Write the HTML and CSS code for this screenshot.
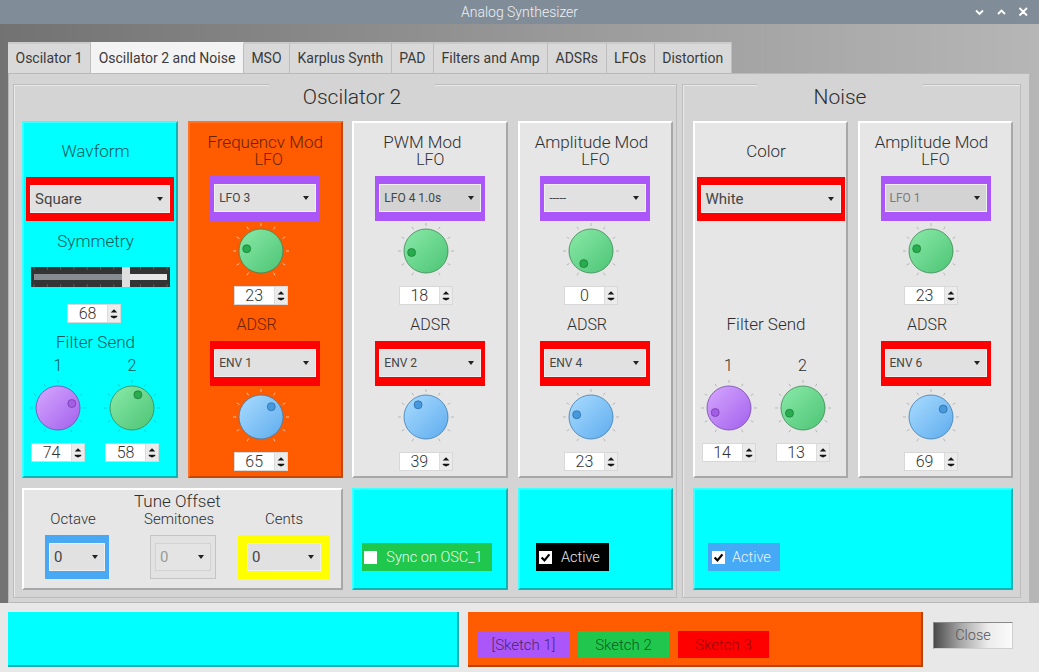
FILE: index.html
```html
<!DOCTYPE html>
<html>
<head>
<meta charset="utf-8">
<title>Analog Synthesizer</title>
<link rel="stylesheet" href="styles.css">
</head>
<body>
<svg class="defs" width="0" height="0" aria-hidden="true">
  <defs>
    <linearGradient id="gg" x1="0" y1="0" x2="1" y2="1"><stop offset="0" stop-color="#8aeaa8"/><stop offset="1" stop-color="#4cc475"/></linearGradient>
    <linearGradient id="gb" x1="0" y1="0" x2="1" y2="1"><stop offset="0" stop-color="#aadcff"/><stop offset="1" stop-color="#5eacee"/></linearGradient>
    <linearGradient id="gp" x1="0" y1="0" x2="1" y2="1"><stop offset="0" stop-color="#d6a8ff"/><stop offset="1" stop-color="#a260ec"/></linearGradient>
    <g id="ticks">
      <line x1="-12.5" y1="21.65" x2="-14" y2="24.25"/>
      <line x1="-21.65" y1="12.5" x2="-24.25" y2="14"/>
      <line x1="-25" y1="0" x2="-28" y2="0"/>
      <line x1="-21.65" y1="-12.5" x2="-24.25" y2="-14"/>
      <line x1="-12.5" y1="-21.65" x2="-14" y2="-24.25"/>
      <line x1="0" y1="-25" x2="0" y2="-28"/>
      <line x1="12.5" y1="-21.65" x2="14" y2="-24.25"/>
      <line x1="21.65" y1="-12.5" x2="24.25" y2="-14"/>
      <line x1="25" y1="0" x2="28" y2="0"/>
      <line x1="21.65" y1="12.5" x2="24.25" y2="14"/>
      <line x1="12.5" y1="21.65" x2="14" y2="24.25"/>
    </g>
    <g id="sp"><path d="M3 7.5h7L6.5 4z"/><path d="M3 11h7v1.4L6.5 14 3 12.4z"/></g>
    <g id="sp0"><path d="M3 7.5h7L6.5 4z"/><path class="dis" d="M3 11h7v1.4L6.5 14 3 12.4z"/></g>
  </defs>
</svg>

<header class="titlebar">
  <span class="ttl">Analog Synthesizer</span>
  <svg class="wctl" width="60" height="24" viewBox="0 0 60 24">
    <path d="M4 10.5l3.5 3.5 3.5-3.5M26 14l3.5-3.5 3.5 3.5M47.5 8l7.5 7.5M55 8l-7.5 7.5"/>
  </svg>
</header>

<nav class="tabs">
  <span class="tab">Oscilator 1</span>
  <span class="tab on">Oscillator 2 and Noise</span>
  <span class="tab">MSO</span>
  <span class="tab">Karplus Synth</span>
  <span class="tab">PAD</span>
  <span class="tab">Filters and Amp</span>
  <span class="tab">ADSRs</span>
  <span class="tab">LFOs</span>
  <span class="tab">Distortion</span>
</nav>

<main class="pane">
  <section class="group osc">
    <h2 class="gtitle">Oscilator 2</h2>
    <div class="ggrid">
      <!-- Wavform -->
      <div class="panel cyan src">
        <div class="lbl first">Wavform</div>
        <div class="frame red fw"><div class="combo">Square<i class="dd"></i></div></div>
        <div class="lbl sym">Symmetry</div>
        <svg class="slider" width="139" height="20" viewBox="0 0 139 20">
          <rect width="139" height="20" fill="#343434"/>
          <path d="M3 0v3M16.3 0v3M29.6 0v3M42.9 0v3M56.2 0v3M69.5 0v3M82.8 0v3M96.1 0v3M109.4 0v3M122.7 0v3M136 0v3M3 17v3M16.3 17v3M29.6 17v3M42.9 17v3M56.2 17v3M69.5 17v3M82.8 17v3M96.1 17v3M109.4 17v3M122.7 17v3M136 17v3" stroke="#5a5a5a" stroke-width="1"/>
          <rect x="3" y="7" width="133" height="6" fill="#e8e8e8"/>
          <rect x="3" y="7" width="89" height="6" fill="#878b92"/>
          <rect x="91" y="0" width="8" height="20" fill="#dedede"/>
        </svg>
        <div class="spin sspin"><span class="sv">68</span><svg class="sb" viewBox="0 0 13 17"><use href="#sp"/></svg></div>
        <div class="lbl fs">Filter Send</div>
        <div class="pair">
          <div class="pc">
            <div class="num">1</div>
            <svg class="knob" width="60" height="60" viewBox="-30 -30 60 60"><use href="#ticks" class="tk"/><circle r="22" class="kp"/><circle cx="13.8" cy="-4.5" r="4" class="kpd"/></svg>
            <div class="spin"><span class="sv">74</span><svg class="sb" viewBox="0 0 13 17"><use href="#sp"/></svg></div>
          </div>
          <div class="pc">
            <div class="num">2</div>
            <svg class="knob" width="60" height="60" viewBox="-30 -30 60 60"><use href="#ticks" class="tk"/><circle r="22" class="kg"/><circle cx="5.9" cy="-13.2" r="4" class="kgd"/></svg>
            <div class="spin"><span class="sv">58</span><svg class="sb" viewBox="0 0 13 17"><use href="#sp"/></svg></div>
          </div>
        </div>
      </div>

      <!-- Frequency mod -->
      <div class="panel orange mod">
        <div class="mtitle"><span class="m1">Frequencv Mod</span><span class="m2 l-f">LFO</span></div>
        <div class="frame purple fm"><div class="combo sm">LFO 3<i class="dd"></i></div></div>
        <svg class="knob" width="60" height="60" viewBox="-30 -30 60 60"><use href="#ticks" class="tk"/><circle r="22" class="kg"/><circle cx="-14.3" cy="-2.3" r="4" class="kgd"/></svg>
        <div class="spin"><span class="sv">23</span><svg class="sb" viewBox="0 0 13 17"><use href="#sp"/></svg></div>
        <div class="lbl adsr">ADSR</div>
        <div class="frame red fm env"><div class="combo sm">ENV 1<i class="dd"></i></div></div>
        <svg class="knob k2" width="60" height="60" viewBox="-30 -30 60 60"><use href="#ticks" class="tk"/><circle r="22" class="kb"/><circle cx="10.3" cy="-10.3" r="4" class="kbd"/></svg>
        <div class="spin"><span class="sv">65</span><svg class="sb" viewBox="0 0 13 17"><use href="#sp"/></svg></div>
      </div>

      <!-- PWM mod -->
      <div class="panel gray mod">
        <div class="mtitle"><span class="m1 s16">PWM Mod</span><span class="m2">LFO</span></div>
        <div class="frame purple fm"><div class="combo sm dark">LFO 4 1.0s<i class="dd"></i></div></div>
        <svg class="knob" width="60" height="60" viewBox="-30 -30 60 60"><use href="#ticks" class="tk"/><circle r="22" class="kg"/><circle cx="-14.4" cy="1.5" r="4" class="kgd"/></svg>
        <div class="spin"><span class="sv">18</span><svg class="sb" viewBox="0 0 13 17"><use href="#sp"/></svg></div>
        <div class="lbl adsr center">ADSR</div>
        <div class="frame red fm env"><div class="combo sm">ENV 2<i class="dd"></i></div></div>
        <svg class="knob k2" width="60" height="60" viewBox="-30 -30 60 60"><use href="#ticks" class="tk"/><circle r="22" class="kb"/><circle cx="-7.9" cy="-12.2" r="4" class="kbd"/></svg>
        <div class="spin"><span class="sv">39</span><svg class="sb" viewBox="0 0 13 17"><use href="#sp"/></svg></div>
      </div>

      <!-- Amplitude mod -->
      <div class="panel gray mod">
        <div class="mtitle"><span class="m1 s8">Amplitude Mod</span><span class="m2">LFO</span></div>
        <div class="frame purple fm"><div class="combo sm">-----<i class="dd"></i></div></div>
        <svg class="knob" width="60" height="60" viewBox="-30 -30 60 60"><use href="#ticks" class="tk"/><circle r="22" class="kg"/><circle cx="-7.25" cy="12.6" r="4" class="kgd"/></svg>
        <div class="spin"><span class="sv">0</span><svg class="sb" viewBox="0 0 13 17"><use href="#sp0"/></svg></div>
        <div class="lbl adsr">ADSR</div>
        <div class="frame red fm env"><div class="combo sm">ENV 4<i class="dd"></i></div></div>
        <svg class="knob k2" width="60" height="60" viewBox="-30 -30 60 60"><use href="#ticks" class="tk"/><circle r="22" class="kb"/><circle cx="-14.3" cy="-2.3" r="4" class="kbd"/></svg>
        <div class="spin"><span class="sv">23</span><svg class="sb" viewBox="0 0 13 17"><use href="#sp"/></svg></div>
      </div>

      <!-- Tune offset -->
      <div class="panel gray tune">
        <div class="tt">Tune Offset</div>
        <div class="tgrid">
          <div class="tl">Octave</div>
          <div class="tl">Semitones</div>
          <div class="tl">Cents</div>
          <div class="frame blue fo"><div class="combo">0<i class="dd"></i></div></div>
          <div class="frame sem fo"><div class="combo dis">0<i class="dd"></i></div></div>
          <div class="frame yellow fc"><div class="combo">0<i class="dd"></i></div></div>
        </div>
      </div>

      <div class="panel cyan chkp sync">
        <div class="chk green">
          <svg class="cb" viewBox="0 0 13 13"><rect width="13" height="13" fill="#fff"/></svg>
          <span>Sync on OSC_1</span>
        </div>
      </div>

      <div class="panel cyan chkp act">
        <div class="chk black">
          <svg class="cb" viewBox="0 0 13 13"><rect width="13" height="13" fill="#fff"/><path d="M2.6 6.4l2.9 3 4.9-6" /></svg>
          <span>Active</span>
        </div>
      </div>
    </div>
  </section>

  <section class="group noise">
    <h2 class="gtitle">Noise</h2>
    <div class="ggrid">
      <div class="panel gray src">
        <div class="lbl first">Color</div>
        <div class="frame red fw"><div class="combo">White<i class="dd"></i></div></div>
        <div class="lbl fs nfs">Filter Send</div>
        <div class="pair npair">
          <div class="pc">
            <div class="num">1</div>
            <svg class="knob" width="60" height="60" viewBox="-30 -30 60 60"><use href="#ticks" class="tk"/><circle r="22" class="kp"/><circle cx="-13.8" cy="4.5" r="4" class="kpd"/></svg>
            <div class="spin"><span class="sv">14</span><svg class="sb" viewBox="0 0 13 17"><use href="#sp"/></svg></div>
          </div>
          <div class="pc">
            <div class="num">2</div>
            <svg class="knob" width="60" height="60" viewBox="-30 -30 60 60"><use href="#ticks" class="tk"/><circle r="22" class="kg"/><circle cx="-13.5" cy="5.2" r="4" class="kgd"/></svg>
            <div class="spin"><span class="sv">13</span><svg class="sb" viewBox="0 0 13 17"><use href="#sp"/></svg></div>
          </div>
        </div>
      </div>

      <div class="panel gray mod">
        <div class="mtitle"><span class="m1 s8">Amplitude Mod</span><span class="m2">LFO</span></div>
        <div class="frame purple fm"><div class="combo sm dark faded">LFO 1<i class="dd"></i></div></div>
        <svg class="knob" width="60" height="60" viewBox="-30 -30 60 60"><use href="#ticks" class="tk"/><circle r="22" class="kg"/><circle cx="-14.3" cy="-2.3" r="4" class="kgd"/></svg>
        <div class="spin"><span class="sv">23</span><svg class="sb" viewBox="0 0 13 17"><use href="#sp"/></svg></div>
        <div class="lbl adsr">ADSR</div>
        <div class="frame red fm env"><div class="combo sm">ENV 6<i class="dd"></i></div></div>
        <svg class="knob k2" width="60" height="60" viewBox="-30 -30 60 60"><use href="#ticks" class="tk"/><circle r="22" class="kb"/><circle cx="12.2" cy="-7.9" r="4" class="kbd"/></svg>
        <div class="spin"><span class="sv">69</span><svg class="sb" viewBox="0 0 13 17"><use href="#sp"/></svg></div>
      </div>

      <div class="panel cyan chkp nact">
        <div class="chk blue">
          <svg class="cb" viewBox="0 0 13 13"><rect width="13" height="13" fill="#fff"/><path d="M2.6 6.4l2.9 3 4.9-6" /></svg>
          <span>Active</span>
        </div>
      </div>
    </div>
  </section>
</main>

<footer class="bottom">
  <div class="bcyan"></div>
  <div class="borange">
    <div class="sk skp">[Sketch 1]</div>
    <div class="sk skg">Sketch 2</div>
    <div class="sk skr">Sketch 3</div>
  </div>
  <div class="close">Close</div>
</footer>
</body>
</html>
```
FILE: styles.css
```css
* { box-sizing: border-box; }
html, body { margin: 0; padding: 0; }
body {
  width: 1039px;
  height: 672px;
  overflow: hidden;
  font-family: Roboto, "Liberation Sans", sans-serif;
  font-weight: 400;
  background: linear-gradient(90deg, #727272 0%, #9a9a9a 55%, #b6b6b6 100%);
}
.defs { display: block; width: 0; height: 0; overflow: hidden; }

/* title bar */
.titlebar {
  height: 24px;
  background: #808c98;
  display: grid;
  grid-template-columns: 1fr auto 1fr;
  align-items: center;
  color: #eef1f4;
  font-size: 14px;
  font-weight: 300;
}
.titlebar .ttl { grid-column: 2; }
.wctl { justify-self: end; margin-right: 7px; display: block; }
.wctl path { fill: none; stroke: #ffffff; stroke-width: 1.8; }

/* tabs */
.tabs { display: flex; margin: 18px 0 0 8px; height: 31px; }
.tab {
  height: 31px;
  padding: 0 7.5px;
  background: #d9d9d9;
  border-top: 2px solid #cbcbcb;
  border-right: 1px solid #bdbdbd;
  font-size: 14px;
  line-height: 29px;
  color: #3a3a3a;
  white-space: nowrap;
}
.tab.on { background: #f3f3f3; border-top-color: #f3f3f3; }

/* tab pane */
.pane {
  margin-left: 8px;
  width: 1022px;
  height: 530px;
  background: #d4d4d4;
  border: 1px solid #b9b9b9;
  padding: 10px 0 0 4px;
  display: flex;
  gap: 5px;
  align-items: flex-start;
}
.group {
  border: 1px solid #bcbcbc;
  box-shadow: inset 1px 1px 0 #e9e9e9;
  display: flex;
  flex-direction: column;
  height: 514px;
}
.group.osc { width: 664px; }
.group.noise { width: 339px; }
.gtitle {
  margin: -1px 0 10px 0;
  height: 27px;
  width: 166px;
  background: #d4d4d4;
  font-size: 21px;
  font-weight: 300;
  line-height: 27px;
  text-align: center;
  color: #2e2e2e;
  align-self: center;
}
.osc .gtitle { margin-left: 14px; }
.noise .gtitle { margin-right: 23px; }

.ggrid { display: grid; row-gap: 10px; grid-template-rows: 357px 102px; }
.osc .ggrid { padding-left: 8px; grid-template-columns: 156px 155px 156px 155px; column-gap: 9.67px; }
.noise .ggrid { padding-left: 10px; grid-template-columns: 155px 155px; column-gap: 10px; }

/* panels */
.panel {
  border: 2px solid;
  display: flex;
  flex-direction: column;
  align-items: center;
}
.cyan { background: #00ffff; border-color: #3cffff #14b2b2 #14b2b2 #3cffff; color: #0e5a5a; }
.orange { background: #ff5b00; border-color: #ff7328 #c44600 #c44600 #ff7328; color: #6a2200; }
.gray { background: #e6e6e6; border-color: #ffffff #a8a8a8 #a8a8a8 #ffffff; color: #2e2e2e; }

.lbl { font-size: 17px; line-height: 20px; margin-right: 9px; font-weight: 300; }
.lbl.first { margin-top: 18px; }
.lbl.sym { margin-top: 10px; }
.lbl.fs { margin-top: 9px; }
.lbl.nfs { margin-top: 93px; }
.lbl.adsr { font-size: 16px; margin-top: 10px; margin-right: 17px; }
.lbl.adsr.center { margin-right: 0; }

.mtitle { margin-top: 10px; display: flex; flex-direction: column; align-items: center; line-height: 18px; font-weight: 300; }
.m1 { font-size: 17px; }
.m1.s16 { margin-right: 16px; }
.m1.s8 { margin-right: 8px; }
.m2 { font-size: 16px; }
.m2.l-f { margin-left: 7px; }

/* framed combo boxes */
.frame { padding: 8px 4px; }
.red { background: #ff0000; }
.purple { background: #aa56f8; }
.blue { background: #48a8f4; }
.yellow { background: #ffff00; }
.fw { width: 148px; height: 44px; margin-top: 16px; }
.fm { width: 110px; height: 45px; padding-bottom: 9px; margin-top: 7px; }
.fm.env { margin-top: 6px; }
.combo {
  height: 28px;
  background: #e1e1e1;
  border: 1px solid #efefef;
  display: flex;
  align-items: center;
  justify-content: space-between;
  padding: 0 6px 0 4px;
  font-size: 15px;
  color: #454545;
  white-space: nowrap;
}
.combo.sm { font-size: 12px; padding-left: 4px; }
.combo.dark { background: #d3d3d3; }
.combo.faded { color: #7a7a7a; }
.combo.dis { background: #e4e4e4; border-color: #d2d2d2; color: #9a9a9a; }
.dd {
  width: 0; height: 0;
  border-left: 3.5px solid transparent;
  border-right: 3.5px solid transparent;
  border-top: 4px solid #222;
}

/* slider */
.slider { display: block; margin-top: 16px; }

/* spin boxes */
.spin {
  display: flex;
  width: 54px;
  height: 19px;
  border: 1px solid #d8d8d8;
  background: #fff;
  margin-top: 5px;
}
.sspin { margin-top: 17px; margin-right: 12px; }
.sv { flex: 1; text-align: center; font-size: 16px; line-height: 17px; color: #333; font-weight: 300; }
.sb { width: 13px; height: 17px; background: #ebebeb; border-left: 1px solid #dcdcdc; display: block; fill: #151515; }
.sb .dis { fill: #b4b4b4; }

/* knobs */
.knob { display: block; }
.mod .knob, .mod .spin { margin-right: 9px; }
.mod .k2 { margin-top: 1px; }
.tk { stroke-width: 1; }
.cyan .tk { stroke: rgba(0, 90, 90, 0.25); }
.orange .tk { stroke: rgba(255, 230, 210, 0.75); }
.gray .tk { stroke: #b7b7b7; }
.kg { fill: url(#gg); stroke: #3e8754; stroke-width: 0.8; }
.kgd { fill: #27ad4d; stroke: #1d7436; stroke-width: 0.7; }
.kb { fill: url(#gb); stroke: #3b7cb0; stroke-width: 0.8; }
.kbd { fill: #4799dd; stroke: #2b669c; stroke-width: 0.7; }
.kp { fill: url(#gp); stroke: #7548aa; stroke-width: 0.8; }
.kpd { fill: #a45de6; stroke: #6a389f; stroke-width: 0.7; }

.pair { display: flex; margin-top: 4px; margin-right: 10px; }
.npair { margin-top: 22px; }
.pc { width: 74px; display: flex; flex-direction: column; align-items: center; }
.num { font-size: 16px; line-height: 20px; font-weight: 300; }
.pc .knob { margin-top: 2px; }

/* tune offset */
.tune { grid-column: 1 / 3; }
.tt { font-size: 17px; line-height: 18px; margin-top: 2px; margin-right: 10px; font-weight: 300; }
.tgrid { display: grid; grid-template-columns: 106px 106px 104px; justify-items: center; align-self: stretch; }
.tl { font-size: 15px; line-height: 18px; margin-right: 8px; font-weight: 300; }
.tgrid .frame { margin-top: 7px; height: 44px; }
.fo { width: 64px; }
.sem { width: 66px; border: 1px solid #c4c4c4; background: #e2e2e2; padding: 7px 4px; }
.fc { width: 92px; padding: 8px 9px; margin-right: 8px; }

/* check box panels */
.chkp { align-items: flex-start; padding-top: 53px; }
.sync { padding-left: 8px; }
.act { padding-left: 16px; }
.nact { grid-column: 1 / 3; padding-left: 13px; }
.chk {
  display: flex;
  align-items: center;
  height: 28px;
  gap: 9px;
  padding: 0 9px 0 2px;
  font-size: 14.5px;
  font-weight: 300;
  color: rgba(255, 255, 255, 0.92);
  white-space: nowrap;
}
.chk.green { background: #1fc84c; }
.chk.black { background: #000; padding-left: 3px; color: #e8e8e8; }
.chk.blue { background: #45a9f6; padding-left: 4px; gap: 7px; color: #e8f4ff; }
.cb { width: 13px; height: 13px; display: block; }
.cb path { fill: none; stroke: #000; stroke-width: 2.2; }

/* bottom bar */
.bottom {
  height: 69px;
  background: #e8e8e8;
  display: flex;
  align-items: flex-start;
  padding: 9px 0 0 8px;
}
.bcyan {
  width: 451px;
  height: 55px;
  background: #00ffff;
  border-right: 2px solid #16b0b0;
  border-bottom: 2px solid #16b0b0;
}
.borange {
  margin-left: 9px;
  width: 455px;
  height: 55px;
  background: #ff5b00;
  border-right: 2px solid #b84200;
  border-bottom: 2px solid #b84200;
  display: flex;
  gap: 9px;
  padding: 19px 0 0 10px;
}
.sk {
  width: 91px;
  height: 27px;
  display: flex;
  align-items: center;
  justify-content: center;
  font-size: 15px;
  font-weight: 300;
  color: rgba(0, 0, 0, 0.6);
}
.skp { background: #aa56f8; }
.skg { background: #1fc84c; }
.skr { background: #ff0000; color: rgba(90, 0, 0, 0.7); }
.close {
  margin: 10px 0 0 10px;
  width: 80px;
  height: 27px;
  background: linear-gradient(90deg, #4a4a4a 0%, #a9a9a9 35%, #ececec 70%, #fbfbfb 100%);
  border: 1px solid #8a8a8a;
  border-bottom-color: #cfcfcf;
  border-right-color: #cfcfcf;
  display: flex;
  align-items: center;
  justify-content: center;
  font-size: 14.5px;
  font-weight: 300;
  color: #555;
}
```
